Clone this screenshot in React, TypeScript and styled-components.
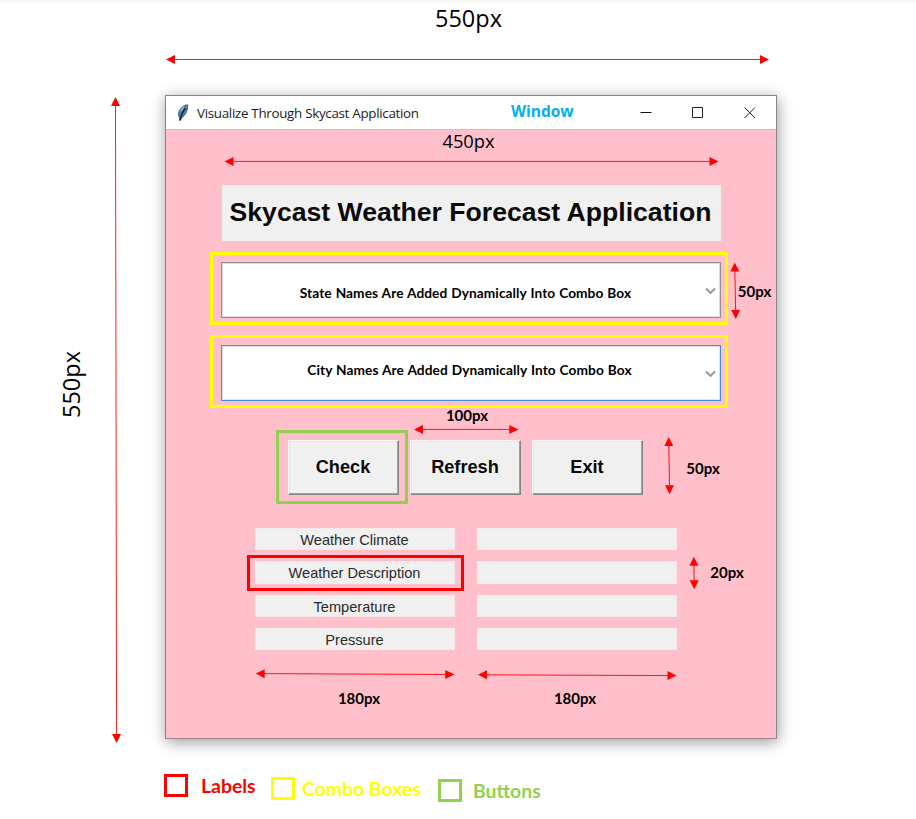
import React from 'react';
import styled, { createGlobalStyle } from 'styled-components';

const GlobalStyle = createGlobalStyle`
  * { box-sizing: border-box; }
  body { margin: 0; background: #fff; }
`;

const calibri = `Lato, 'Open Sans', sans-serif`;
const humanist = `'Open Sans', 'Noto Sans', sans-serif`;
const arial = `'Liberation Sans', Arial, sans-serif`;

const Page = styled.main`
  position: relative;
  width: 916px;
  height: 819px;
  overflow: hidden;
  background: linear-gradient(#f6f6f6, #fff 4px);
  display: grid;
  grid-template-columns: 165px 612px;
  grid-template-rows: 95px 644px 80px;
  font-family: ${calibri};
`;

const WidthHeading = styled.div`
  grid-column: 2;
  padding: 2px 5px 0 0;
  text-align: center;
  font-family: ${humanist};
  font-size: 23.5px;
  line-height: 32px;
  color: #000;
`;

const HeightHeading = styled.div`
  grid-column: 1;
  grid-row: 2;
  display: flex;
  align-items: center;
  padding: 0 0 66px 55px;
`;

const VerticalText = styled.span`
  writing-mode: vertical-rl;
  transform: rotate(180deg);
  font-family: ${humanist};
  font-size: 23.5px;
  line-height: 32px;
`;

const AppWindow = styled.section`
  position: relative;
  grid-column: 2;
  grid-row: 2;
  display: flex;
  flex-direction: column;
  border: 1px solid #858585;
  border-bottom-color: #a08087;
  background: #ffc0cb;
  box-shadow: 1px 3px 14px rgba(0, 0, 0, 0.4);
`;

const TitleBar = styled.header`
  display: flex;
  align-items: center;
  height: 34px;
  padding-left: 11px;
  background: #fff;
  border-bottom: 1px solid #e3b5bd;
`;

const TitleText = styled.h1`
  margin: 0 0 0 8px;
  width: 314px;
  font: 400 13.4px/20px ${humanist};
  letter-spacing: -0.31px;
  color: #1c1c1c;
  white-space: nowrap;
`;

const WindowTag = styled.span`
  width: 129px;
  padding-bottom: 4px;
  font-family: ${humanist};
  font-size: 15.5px;
  font-weight: 700;
  color: #00b0f0;
`;

const Controls = styled.div`
  display: flex;
  gap: 40px;
`;

const Body = styled.div`
  display: flex;
  flex-direction: column;
  align-items: center;
`;

const InnerWidth = styled.div`
  height: 55px;
  padding-right: 5px;
  font-family: ${humanist};
  font-size: 18.3px;
  line-height: 22px;
`;

const Banner = styled.h2`
  width: 499px;
  height: 56px;
  margin: 0 0 11px;
  padding-right: 1px;
  background: #f0f0f0;
  text-align: center;
  font: 700 26.6px/55px ${arial};
  color: #0a0a0a;
  white-space: nowrap;
`;

const YellowFrame = styled.div`
  width: 518px;
  height: 73px;
  margin: 0 4px 10px 0;
  padding: 7px 4px 0 8px;
  border: 3px solid #ff0;
`;

const Combo = styled.div<{ $active?: boolean }>`
  position: relative;
  display: flex;
  align-items: center;
  justify-content: center;
  width: 500px;
  height: 56px;
  padding: ${p => (p.$active ? '0 3px 7px 0' : '4px 3px 0 0')};
  border: 1px solid ${p => (p.$active ? '#4090d8' : '#969096')};
  box-shadow: inset 0 0 0 1px ${p => (p.$active ? '#d5e8f8' : '#dedede')};
  background: #fff;
  font-size: 13.7px;
  font-weight: 700;
  letter-spacing: 0.08px;
  word-spacing: 0.5px;
  white-space: nowrap;
`;

const ComboText = styled.span<{ $shift: number }>`
  padding-right: ${p => p.$shift}px;
`;

const Chevron = styled.svg`
  position: absolute;
  right: 4px;
  top: 24px;
  width: 11px;
  height: 8px;
`;

const ButtonRow = styled.div`
  display: flex;
  gap: 11px;
  width: 367px;
  margin: 12px 24px 0 0;
  height: 74px;
`;

const GreenFrame = styled.div`
  width: 132px;
  height: 74px;
  padding: 7px 6px 7px 9px;
  margin-right: -9px;
  border: 3px solid #92d050;
`;

const TkButton = styled.button<{ $framed?: boolean }>`
  width: 111px;
  height: 55px;
  margin: ${p => (p.$framed ? 0 : 10)}px 0 0;
  padding: 0;
  border: 1px solid;
  border-color: #fbf3f4 #858585 #858585 #fbf3f4;
  box-shadow: inset -1px -1px #a0a0a0, inset 1px 1px #e8e8e8;
  background: #f0f0f0;
  font: 700 18.2px ${arial};
  color: #0a0a0a;
`;

const Fields = styled.div`
  display: grid;
  grid-template-columns: 200px 200px;
  grid-auto-rows: 22.4px;
  gap: 10.9px 22px;
  margin: 24px 11px 0 0;
`;

const Field = styled.div`
  background: #f0f0f0;
  box-shadow: inset 0 0 0 1px #f3e8ea;
  text-align: center;
  font: 400 14.6px/24px ${arial};
  color: #2a2a2a;
`;

const RedFrame = styled.div`
  position: absolute;
  left: 81px;
  top: 459px;
  width: 217px;
  height: 36px;
  border: 3px solid #f00;
`;

const Note = styled.span<{ $x: number; $y: number }>`
  position: absolute;
  left: ${p => p.$x}px;
  top: ${p => p.$y}px;
  transform: translate(-50%, -50%);
  font-size: 15px;
  font-weight: 700;
  line-height: 18px;
  color: #000;
`;

const ArrowLayer = styled.svg`
  position: absolute;
  inset: 0;
  width: 916px;
  height: 819px;
  pointer-events: none;
`;

const Legend = styled.footer`
  grid-column: 2;
  grid-row: 3;
  display: flex;
  align-items: flex-start;
  margin-left: -1px;
`;

const LegendItem = styled.div<{ $color: string; $top: number; $width: number; $gap: number }>`
  display: flex;
  gap: ${p => p.$gap}px;
  width: ${p => p.$width}px;
  margin-top: ${p => p.$top}px;
  color: ${p => p.$color};
  font-size: 19.4px;
  font-weight: 700;
  line-height: 23px;
  white-space: nowrap;
`;

const Swatch = styled.span`
  flex: none;
  width: 24px;
  height: 23px;
  border: 3px solid currentColor;
`;

const arrows: [number, number, number, number][] = [
  [166, 59.5, 769, 59.5],
  [115.5, 97, 116.6, 743],
  [224.5, 161.4, 718.5, 161.4],
  [734.7, 262.5, 735.8, 319],
  [414, 429.4, 518.3, 429.4],
  [668.7, 437, 669.6, 494.3],
  [255.7, 673.6, 454.3, 674.5],
  [478, 674.8, 676.5, 675.6],
  [693.8, 556.8, 694.3, 589.3],
];

const DoubleArrow = ({ points }: { points: [number, number, number, number] }) => {
  const [x1, y1, x2, y2] = points;
  const length = Math.hypot(x2 - x1, y2 - y1);
  const angle = (Math.atan2(y2 - y1, x2 - x1) * 180) / Math.PI;
  return (
    <g transform={`translate(${x1} ${y1}) rotate(${angle})`} fill="#f00">
      <path d={`M8 0H${length - 8}`} stroke="#f00" strokeWidth="0.9" />
      <path d="M0 0L9 -4.5V4.5Z" />
      <path d={`M${length} 0l-9 -4.5v9Z`} />
    </g>
  );
};

const ComboArrow = () => (
  <Chevron viewBox="0 0 11 8">
    <path d="M1 1.5L5.5 6L10 1.5" fill="none" stroke="#949494" strokeWidth="1.8" />
  </Chevron>
);

const Feather = () => (
  <svg width="12" height="18" viewBox="0 0 12 18">
    <path d="M10.6.8C7 .9 3.2 4 1.8 8.2c-.6 2.2-.3 4 .6 5.4L3 16.6l1.2-2.6C8.4 11.6 11.2 6.4 10.6.8Z" fill="#4a80bb" stroke="#5a6066" strokeWidth="1" />
    <path d="M8.4 4.2C6 7 4.2 10.4 3.2 16.4" fill="none" stroke="#17202b" strokeWidth="1.5" />
    <path d="M7 2.8 3.4 7.2" stroke="#9fbbd8" strokeWidth="1.1" />
  </svg>
);

const rows = ['Weather Climate', 'Weather Description', 'Temperature', 'Pressure'];

export default function App() {
  return (
    <>
      <GlobalStyle />
      <Page>
        <WidthHeading>550px</WidthHeading>
        <HeightHeading>
          <VerticalText>550px</VerticalText>
        </HeightHeading>
        <AppWindow>
          <TitleBar>
            <Feather />
            <TitleText>Visualize Through Skycast Application</TitleText>
            <WindowTag>Window</WindowTag>
            <Controls>
              <svg width="12" height="12" viewBox="0 0 12 12"><path d="M.5 5.5h11" stroke="#111" /></svg>
              <svg width="12" height="12" viewBox="0 0 12 12"><path d="M.5.5h10v10H.5Z" fill="none" stroke="#222" /></svg>
              <svg width="12" height="12" viewBox="0 0 12 12"><path d="M.5.5l10.5 10.5M11 .5L.5 11" stroke="#222" /></svg>
            </Controls>
          </TitleBar>
          <Body>
            <InnerWidth>450px</InnerWidth>
            <Banner>Skycast Weather Forecast Application</Banner>
            <YellowFrame>
              <Combo>
                <ComboText $shift={8}>State Names Are Added Dynamically Into Combo Box</ComboText>
                <ComboArrow />
              </Combo>
            </YellowFrame>
            <YellowFrame>
              <Combo $active>
                <ComboText $shift={0}>City Names Are Added Dynamically Into Combo Box</ComboText>
                <ComboArrow />
              </Combo>
            </YellowFrame>
            <ButtonRow>
              <GreenFrame>
                <TkButton $framed>Check</TkButton>
              </GreenFrame>
              <TkButton>Refresh</TkButton>
              <TkButton>Exit</TkButton>
            </ButtonRow>
            <Fields>
              {rows.map(label => (
                <React.Fragment key={label}>
                  <Field>{label}</Field>
                  <Field />
                </React.Fragment>
              ))}
            </Fields>
          </Body>
          <RedFrame />
          <Note $x={588.5} $y={195}>50px</Note>
          <Note $x={301} $y={319}>100px</Note>
          <Note $x={537} $y={372}>50px</Note>
          <Note $x={561} $y={476}>20px</Note>
          <Note $x={193} $y={602}>180px</Note>
          <Note $x={409} $y={602}>180px</Note>
        </AppWindow>
        <Legend>
          <LegendItem $color="#f00" $top={35} $width={107} $gap={13}><Swatch />Labels</LegendItem>
          <LegendItem $color="#ff0" $top={38} $width={167} $gap={7}><Swatch />Combo Boxes</LegendItem>
          <LegendItem $color="#92d050" $top={40} $width={110} $gap={11}><Swatch />Buttons</LegendItem>
        </Legend>
        <ArrowLayer viewBox="0 0 916 819">
          {arrows.map((points, i) => <DoubleArrow key={i} points={points} />)}
        </ArrowLayer>
      </Page>
    </>
  );
}
